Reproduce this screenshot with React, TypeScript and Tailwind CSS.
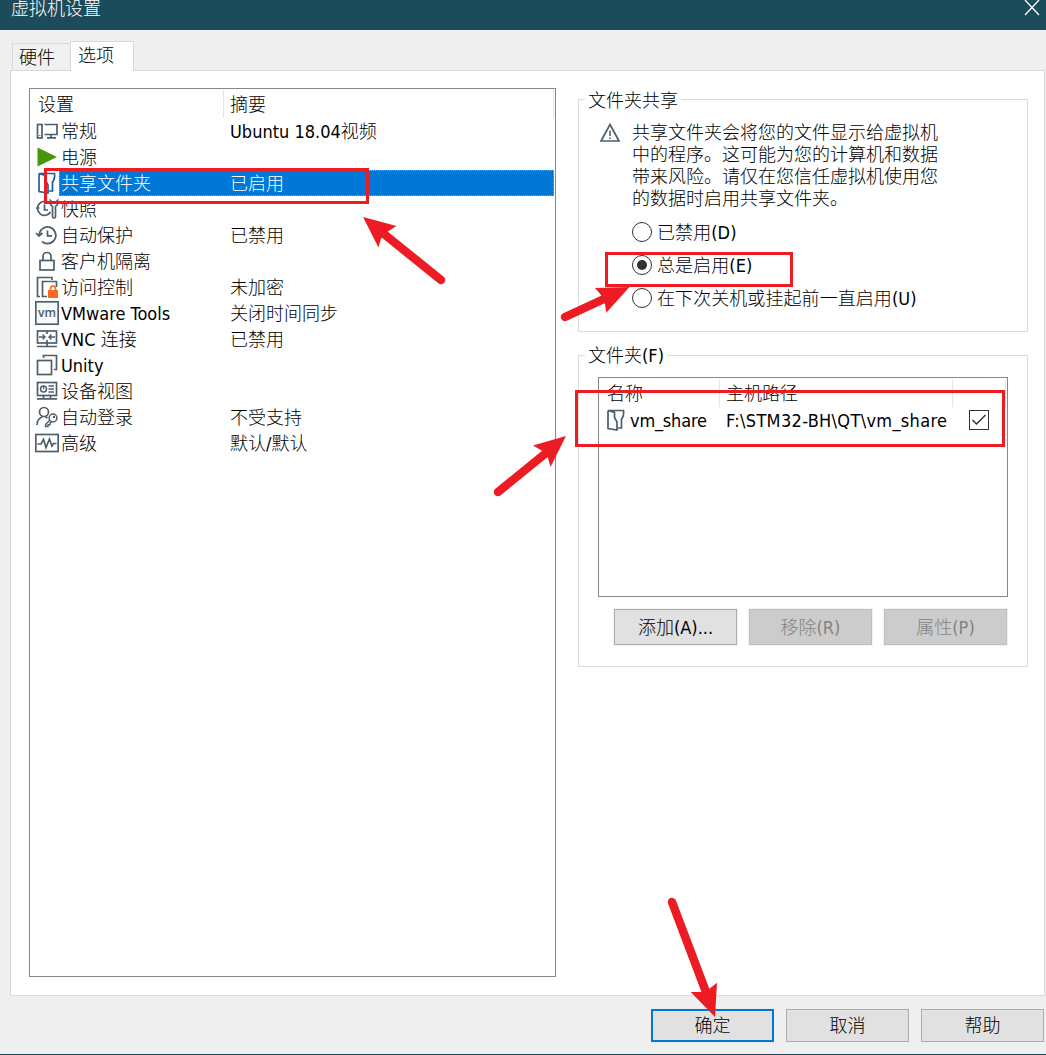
import type { ReactNode } from "react";

const STROKE = "#4d5f6b";
const RED = "#ed1c24";

const Icon = ({ children }: { children: ReactNode }) => (
  <svg
    width="24"
    height="26"
    viewBox="0 0 24 26"
    fill="none"
    stroke={STROKE}
    strokeWidth="1.7"
    className="shrink-0"
  >
    {children}
  </svg>
);

const FolderShape = () => (
  <path d="M4 3.5H19.5C20 7 19.5 9.5 17.5 12V21H14M4 3.5V21.5L13 23V15L10.5 10.5V5.5L4 3.5" />
);

const icons = {
  general: (
    <Icon>
      <rect x="2.5" y="6.5" width="4.5" height="13.5" />
      <path d="M9.5 6.5H22V16.5H9.5M16 16.5V19.5M12 19.8H21" />
      <path d="M4.2 17.5H5.3" strokeWidth="1" />
    </Icon>
  ),
  power: (
    <Icon>
      <path d="M2.5 3.5L22 13L2.5 22.5Z" fill="#45960b" stroke="none" />
    </Icon>
  ),
  folder: (
    <Icon>
      <g stroke="#1f5f99">
        <FolderShape />
      </g>
    </Icon>
  ),
  snapshot: (
    <Icon>
      <path d="M14.5 7.5A7 7 0 1 0 15.5 16M1 12H4.5M9.5 8.5V14H13" />
      <path
        d="M15.5 4.5V8.5L17.5 10.5V20.5C17.5 22.5 20.5 22.5 20.5 20.5V10.5L22.5 8.5V4.5L20 7H18Z"
        fill="#fff"
      />
    </Icon>
  ),
  protect: (
    <Icon>
      <path d="M4.2 13.5A8.3 8.3 0 1 1 7 19.5M1 11L4 14L7.5 11M12.5 8.5V13.8H17" />
    </Icon>
  ),
  lock: (
    <Icon>
      <rect x="5" y="12.5" width="14" height="9.5" />
      <path d="M8 12.5V8.5A4 4 0 0 1 16 8.5V12.5" />
    </Icon>
  ),
  access: (
    <Icon>
      <path d="M5 22.5H2.5V3.5H17V6M12 22.5H7.5V7.5H21.5V13" />
      <rect x="13" y="16" width="10" height="8" fill="#fb6a21" stroke="none" />
      <path
        d="M15.5 16V14.5A2.5 2.5 0 0 1 20.5 14.5V16"
        stroke="#fb6a21"
      />
    </Icon>
  ),
  tools: (
    <Icon>
      <rect x="0.8" y="1.8" width="22.4" height="22.4" fill="#f7f8f9" />
      <text
        x="12"
        y="16.8"
        textAnchor="middle"
        fontSize="13"
        fontWeight="600"
        textLength="18"
        lengthAdjust="spacingAndGlyphs"
        fontFamily="Open Sans, sans-serif"
        fill={STROKE}
        stroke="none"
      >
        vm
      </text>
    </Icon>
  ),
  vnc: (
    <Icon>
      <rect x="2.5" y="5" width="19" height="12" />
      <path d="M12 5V8M12 14V20M2 20.5H22" />
      <path
        d="M4 11H10M7.5 8.5L10 11L7.5 13.5M20 11H14M16.5 8.5L14 11L16.5 13.5"
        strokeWidth="1.4"
      />
    </Icon>
  ),
  unity: (
    <Icon>
      <rect x="2.5" y="8.5" width="14" height="14" />
      <path d="M8.5 6V3.5H21.5V17.5H19" />
    </Icon>
  ),
  device: (
    <Icon>
      <rect x="2.5" y="4.5" width="19" height="13" />
      <circle cx="8.5" cy="11" r="3" strokeWidth="1.5" />
      <path d="M8.5 8V11M13.5 8H19M13.5 11H19M13.5 14H19" strokeWidth="1.3" />
      <path d="M8.5 17.5V20.5M15.5 17.5V20.5M2 20.8H22" />
    </Icon>
  ),
  login: (
    <Icon>
      <circle cx="9" cy="8" r="4.5" />
      <path d="M2 21C2 16.5 4 14 7.5 12.7M10.5 12.7L12.5 14" />
      <circle cx="18" cy="14" r="3.9" strokeWidth="1.5" />
      <path
        d="M15 16L10.5 20.5V22.5H13V20.8H15V19L17 17.5"
        strokeWidth="1.4"
      />
      <circle cx="19" cy="13" r="0.6" strokeWidth="1.2" />
    </Icon>
  ),
  advanced: (
    <Icon>
      <rect x="0.8" y="4.5" width="22.4" height="17" />
      <path d="M2.5 14H6L8.5 9.5L11 17.5L14.5 9L17 16L18.5 13.5H21.5" />
    </Icon>
  ),
};

const rows: { icon: ReactNode; name: string; summary?: string }[] = [
  { icon: icons.general, name: "常规", summary: "Ubuntu 18.04视频" },
  { icon: icons.power, name: "电源" },
  { icon: icons.folder, name: "共享文件夹", summary: "已启用" },
  { icon: icons.snapshot, name: "快照" },
  { icon: icons.protect, name: "自动保护", summary: "已禁用" },
  { icon: icons.lock, name: "客户机隔离" },
  { icon: icons.access, name: "访问控制", summary: "未加密" },
  { icon: icons.tools, name: "VMware Tools", summary: "关闭时间同步" },
  { icon: icons.vnc, name: "VNC 连接", summary: "已禁用" },
  { icon: icons.unity, name: "Unity" },
  { icon: icons.device, name: "设备视图" },
  { icon: icons.login, name: "自动登录", summary: "不受支持" },
  { icon: icons.advanced, name: "高级", summary: "默认/默认" },
];

const options = [
  { label: "已禁用(D)", checked: false },
  { label: "总是启用(E)", checked: true },
  { label: "在下次关机或挂起前一直启用(U)", checked: false },
];

const SettingsList = () => (
  <div className="w-[527px] h-[889px] border border-[#828790] bg-white">
    <div className="flex h-[29px] pt-px pr-px">
      <div className="w-[194px] h-[28px] pl-2 leading-[30px] border-r border-[#e5e5e5]">
        设置
      </div>
      <div className="flex-1 h-[28px] pl-[6px] leading-[30px] border-r border-[#e5e5e5]">
        摘要
      </div>
    </div>
    {rows.map((row) => {
      const selected = row.name === "共享文件夹";
      return (
        <div key={row.name} className="flex h-[26px] pl-[5px] pr-px">
          {row.icon}
          <div
            className={
              selected
                ? "flex flex-1 bg-[#0078d7] text-white border border-dotted border-[#ff8728] leading-[26px]"
                : "flex flex-1 pl-px leading-[28px]"
            }
          >
            <div className="w-[170px] pl-px shrink-0">{row.name}</div>
            <div>{row.summary}</div>
          </div>
        </div>
      );
    })}
  </div>
);

const SharingGroup = () => (
  <section className="w-[450px] h-[233px] border border-[#dcdcdc]">
    <h2 className="w-fit h-[22px] -mt-[12px] ml-[6px] px-[3px] leading-[25px] bg-white">
      文件夹共享
    </h2>
    <div className="flex mt-[12px] pl-[20px]">
      <svg width="22" height="22" viewBox="0 0 22 22" className="shrink-0">
        <path
          d="M11 2.5L20 19H2Z"
          fill="none"
          stroke={STROKE}
          strokeWidth="1.7"
        />
        <path d="M11 8.5V14M11 15.5V17" stroke={STROKE} strokeWidth="1.5" />
      </svg>
      <p className="w-[308px] ml-[11px] leading-[22px]">
        共享文件夹会将您的文件显示给虚拟机
        <br />
        中的程序。这可能为您的计算机和数据
        <br />
        带来风险。请仅在您信任虚拟机使用您
        <br />
        的数据时启用共享文件夹。
      </p>
    </div>
    <div className="mt-[5px] pl-[53px]">
      {options.map((option) => (
        <div key={option.label} className="flex items-center h-[33px]">
          <span className="flex items-center justify-center size-[20px] rounded-full border border-[#333]">
            {option.checked && (
              <span className="size-[10px] rounded-full bg-[#333]" />
            )}
          </span>
          <span className="ml-[5px] pt-[3px] tracking-[0.07px]">
            {option.label}
          </span>
        </div>
      ))}
    </div>
  </section>
);

const FoldersGroup = () => (
  <section className="w-[450px] h-[312px] mt-[23px] border border-[#dcdcdc]">
    <h2 className="w-fit h-[22px] -mt-[12px] ml-[6px] px-[3px] leading-[24px] bg-white">
      文件夹(F)
    </h2>
    <div className="w-[410px] h-[220px] mt-[11px] ml-[19px] border border-[#828790] bg-white">
      <div className="flex h-[29px] pt-px pr-px leading-[30px]">
        <div className="w-[121px] pl-2 border-r border-[#e5e5e5]">名称</div>
        <div className="w-[233px] pl-[6px] border-r border-[#e5e5e5]">
          主机路径
        </div>
        <div className="flex-1 border-r border-[#e5e5e5]" />
      </div>
      <div className="flex items-center h-[26px] pl-[5px]">
        <Icon>
          <FolderShape />
        </Icon>
        <span className="w-[98px] pl-[2px] pt-px tracking-[-0.2px]">
          vm_share
        </span>
        <span className="w-[243px] pt-px tracking-[0.32px]">
          F:\STM32-BH\QT\vm_share
        </span>
        <span className="flex items-center justify-center size-[20px] border border-[#333]">
          <svg width="16" height="14" viewBox="0 0 16 14" fill="none">
            <path d="M1.5 7L5.5 11L14.5 2" stroke="#333" strokeWidth="1.5" />
          </svg>
        </span>
      </div>
    </div>
    <div className="flex gap-[10px] mt-[11px] ml-[34px]">
      <button className="w-[125px] h-[38px] border border-[#f3f3f3]">
        <span className="flex items-center justify-center h-full pt-[2px] border border-[#adadad] bg-[#e1e1e1]">
          添加(A)...
        </span>
      </button>
      <button className="w-[125px] h-[38px] border border-[#f3f3f3] text-[#838383]">
        <span className="flex items-center justify-center h-full pt-[2px] border border-[#bfbfbf] bg-[#cccccc]">
          移除(R)
        </span>
      </button>
      <button className="w-[125px] h-[38px] border border-[#f3f3f3] text-[#838383]">
        <span className="flex items-center justify-center h-full pt-[2px] border border-[#bfbfbf] bg-[#cccccc]">
          属性(P)
        </span>
      </button>
    </div>
  </section>
);

// Red marks drawn over the dialog
const Annotations = () => (
  <svg
    className="absolute inset-0 pointer-events-none"
    width="1046"
    height="1055"
    viewBox="0 0 1046 1055"
  >
    <g fill="none" stroke={RED} strokeWidth="3">
      <rect x="45.5" y="169.5" width="322" height="33" />
      <rect x="606.5" y="253.5" width="185" height="32" />
      <rect x="576.5" y="391.5" width="427" height="54" />
    </g>
    <g stroke={RED} strokeWidth="8.5" strokeLinecap="round">
      <path d="M441 280L384 234" />
      <path d="M565 317L604 299" />
      <path d="M498 492L546 453" />
      <path d="M672 902L706 992" />
    </g>
    <g fill={RED}>
      <path d="M363 217L396.5 226L387 232L381 238.5L378.5 247.5Z" />
      <path d="M629.5 287L595 288L601 295L605 304L606.3 312.7Z" />
      <path d="M566 436L533 445.5L542.5 451L548 458L550.5 467Z" />
      <path d="M715 1017L690.7 992L702 992L709 989L717 982.7Z" />
    </g>
  </svg>
);

const App = () => {
  return (
    <div className="relative flex flex-col w-[1046px] h-[1055px] overflow-hidden bg-[#efefef] border-b border-[#1c4c5b] text-black text-[18px] leading-[24px] font-light font-['DejaVu_Sans_Condensed','Noto_Sans_CJK_SC',sans-serif]">
      <header className="flex items-start justify-between h-[30px] pl-[11px] pr-[6px] bg-[#1c4c5b] text-white">
        <span className="leading-[15px] font-['Noto_Sans_CJK_SC',sans-serif]">
          虚拟机设置
        </span>
        <svg width="16" height="16" viewBox="0 0 16 16">
          <path d="M1 0L15 15M15 0L1 15" stroke="#fff" strokeWidth="1.3" />
        </svg>
      </header>

      <nav className="flex items-end h-[41px] pl-[12px]">
        <div className="w-[58px] h-[28px] pl-[6px] leading-[28px] border border-r-0 border-[#d9d9d9] bg-[#f0f0f0]">
          硬件
        </div>
        <div className="relative w-[64px] h-[30px] pl-[7px] leading-[28px] border border-b-0 border-[#d9d9d9] bg-white">
          选项
        </div>
      </nav>

      <main className="flex w-[1035px] h-[926px] -mt-px ml-[10px] pt-[17px] pl-[18px] border border-[#d9d9d9] bg-white">
        <SettingsList />
        <div className="ml-[22px] pt-[11px]">
          <SharingGroup />
          <FoldersGroup />
        </div>
      </main>

      <footer className="flex gap-[12px] mt-[13px] pl-[651px]">
        <button className="w-[123px] h-[33px] border-2 border-[#0078d7] bg-[#e1e1e1] shrink-0">
          确定
        </button>
        <button className="w-[123px] h-[33px] border border-[#adadad] bg-[#e1e1e1] shrink-0">
          取消
        </button>
        <button className="w-[123px] h-[33px] border border-[#adadad] bg-[#e1e1e1] shrink-0">
          帮助
        </button>
      </footer>

      <Annotations />
    </div>
  );
};

export default App;
